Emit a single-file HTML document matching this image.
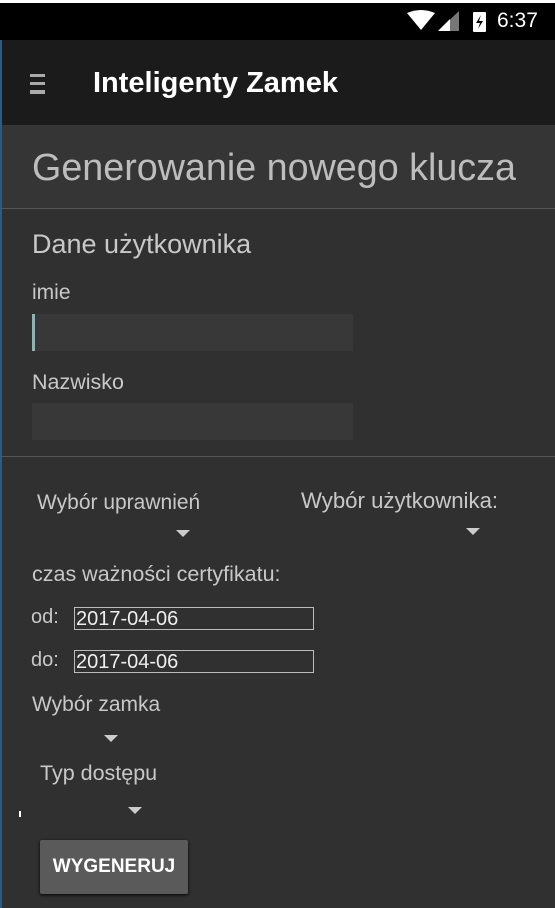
<!DOCTYPE html><html><head><style>
body{margin:0;width:555px;height:908px;background:#303030;position:relative;overflow:hidden;font-family:"Liberation Sans",sans-serif;color:#c8c8c8}
.a{position:absolute}
.t{position:absolute;white-space:nowrap}
.tri{position:absolute;width:0;height:0;border-left:7px solid transparent;border-right:7px solid transparent;border-top:7px solid #ccc}
.date{position:absolute;left:74px;width:240px;height:23px;border:1px solid #bbb;color:#eee;font-size:20px;line-height:23px;padding-left:1px;box-sizing:border-box}
</style></head><body>
<div class="a" style="left:0;top:0;width:555px;height:3px;background:#fff"></div>
<div class="a" style="left:0;top:3px;width:555px;height:37px;background:#000"></div>
<svg class="a" style="left:405px;top:10px" width="90" height="24"><path d="M2 3 Q16 -3 30 3 L16 20 Z" fill="#fff"/><path d="M33 21 L54 1 L54 21 Z" fill="#777"/><path d="M33 21 L45 9 L45 21 Z" fill="#fff"/><rect x="68" y="2" width="13" height="20" rx="1" fill="#fff"/><path d="M76 5 L71 13 L75 13 L73 19 L78 11 L74 11 Z" fill="#000"/></svg>
<div class="t" style="left:497px;top:9px;font-size:21px;color:#fff">6:37</div>
<div class="a" style="left:0;top:40px;width:555px;height:85px;background:#1b1b1b"></div>
<div class="a" style="left:0;top:40px;width:2px;height:868px;background:#2a5b85"></div>
<div class="a" style="left:30px;top:74px;width:15px;height:3px;background:#aaa"></div>
<div class="a" style="left:30px;top:82px;width:15px;height:3px;background:#aaa"></div>
<div class="a" style="left:30px;top:90px;width:15px;height:4px;background:#aaa"></div>
<div class="t" style="left:93px;top:67px;font-size:29px;font-weight:bold;color:#fff">Inteligenty Zamek</div>
<div class="a" style="left:2px;top:125px;width:553px;height:83px;background:#353535"></div>
<div class="t" style="left:32px;top:146px;font-size:37.7px;color:#bdbdbd">Generowanie nowego klucza</div>
<div class="a" style="left:2px;top:208px;width:553px;height:1px;background:#555"></div>
<div class="t" style="left:32px;top:229px;font-size:27px">Dane użytkownika</div>
<div class="t" style="left:32px;top:281px;font-size:21px">imie</div>
<div class="a" style="left:32px;top:314px;width:321px;height:37px;background:#383838"></div>
<div class="a" style="left:32px;top:314px;width:3px;height:37px;background:#8fb3b3"></div>
<div class="t" style="left:32px;top:370px;font-size:21.5px">Nazwisko</div>
<div class="a" style="left:32px;top:403px;width:321px;height:37px;background:#383838"></div>
<div class="a" style="left:2px;top:456px;width:553px;height:1px;background:#555"></div>
<div class="t" style="left:37px;top:491px;font-size:21px">Wybór uprawnień</div>
<div class="tri" style="left:176px;top:530px"></div>
<div class="t" style="left:301px;top:488px;font-size:22.2px">Wybór użytkownika:</div>
<div class="tri" style="left:466px;top:528px"></div>
<div class="t" style="left:32px;top:562px;font-size:21.5px">czas ważności certyfikatu:</div>
<div class="t" style="left:31px;top:606px;font-size:20px">od:</div>
<div class="date" style="top:607px">2017-04-06</div>
<div class="t" style="left:31px;top:649px;font-size:20px">do:</div>
<div class="date" style="top:650px">2017-04-06</div>
<div class="t" style="left:32px;top:693px;font-size:21px">Wybór zamka</div>
<div class="tri" style="left:104px;top:735px"></div>
<div class="t" style="left:40px;top:761px;font-size:21.5px">Typ dostępu</div>
<div class="tri" style="left:128px;top:807px"></div>
<div class="a" style="left:19px;top:811px;width:2px;height:6px;background:#fff"></div>
<div class="a" style="left:40px;top:840px;width:148px;height:54px;background:#5a5a5a;border-radius:2px;box-shadow:0 1px 3px #000"></div>
<div class="t" style="left:40px;top:856px;width:148px;text-align:center;font-size:19px;font-weight:bold;color:#fff">WYGENERUJ</div>
</body></html>
